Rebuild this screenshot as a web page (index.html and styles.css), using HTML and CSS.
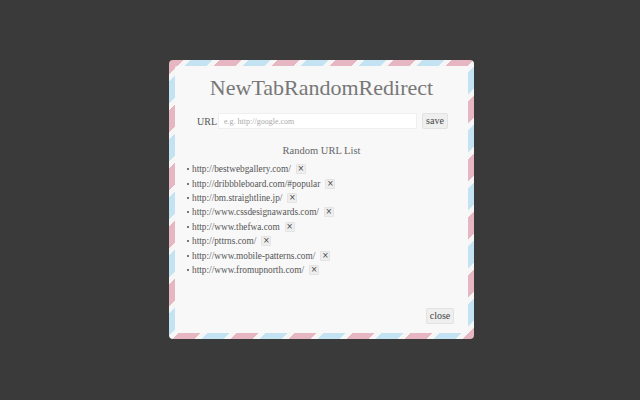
FILE: index.html
```html
<!DOCTYPE html>
<html>
<head>
<meta charset="utf-8">
<link rel="stylesheet" href="styles.css">
</head>
<body>
<div class="card">
  <div class="inner">
    <h1 class="title">NewTabRandomRedirect</h1>
    <div class="url-row">
      <label class="url-label">URL</label>
      <input class="url-input" type="text" placeholder="e.g. http://google.com">
      <button class="btn save">save</button>
    </div>
    <h2 class="list-title">Random URL List</h2>
    <ul class="list">
      <li><span>http://bestwebgallery.com/</span><button class="x">×</button></li>
      <li><span>http://dribbbleboard.com/#popular</span><button class="x">×</button></li>
      <li><span>http://bm.straightline.jp/</span><button class="x">×</button></li>
      <li><span>http://www.cssdesignawards.com/</span><button class="x">×</button></li>
      <li><span>http://www.thefwa.com</span><button class="x">×</button></li>
      <li><span>http://pttrns.com/</span><button class="x">×</button></li>
      <li><span>http://www.mobile-patterns.com/</span><button class="x">×</button></li>
      <li><span>http://www.fromupnorth.com/</span><button class="x">×</button></li>
    </ul>
    <div class="footer">
      <button class="btn close">close</button>
    </div>
  </div>
</div>
</body>
</html>
```

FILE: styles.css
```css
html, body {
  margin: 0;
  padding: 0;
}
body {
  background: #3a3a3a;
  width: 640px;
  height: 400px;
  font-family: "Liberation Serif", "DejaVu Serif", serif;
  color: #555;
}
.card {
  box-sizing: border-box;
  width: 305px;
  height: 279px;
  margin: 60px 0 0 169px;
  padding: 6px;
  border-radius: 4px;
  background: repeating-linear-gradient(135deg,
    #e6b7c3 0, #e6b7c3 10.5px,
    #f6f6f6 10.5px, #f6f6f6 15px,
    #c3e2f2 15px, #c3e2f2 31px,
    #f6f6f6 31px, #f6f6f6 35.5px,
    #e6b7c3 35.5px, #e6b7c3 41px);
}
.inner {
  box-sizing: border-box;
  height: 100%;
  background: #f8f8f8;
  border-radius: 2px;
  display: flex;
  flex-direction: column;
  padding: 0 12px 9px 12px;
}
.title {
  margin: 8px 0 0;
  font-weight: normal;
  font-size: 22px;
  line-height: 28px;
  color: #777;
  text-align: center;
}
.url-row {
  display: flex;
  align-items: center;
  margin-top: 11px;
  padding-left: 10px;
}
.url-label {
  font-size: 10px;
  color: #555;
  width: 21px;
}
.url-input {
  box-sizing: border-box;
  width: 199px;
  height: 16px;
  border: 1px solid #efefef;
  background: #fff;
  padding: 0 5px;
  font-family: "Liberation Serif", serif;
  font-size: 8px;
  outline: none;
}
.url-input::placeholder {
  color: #aaa;
}
.btn {
  box-sizing: border-box;
  border: 1px solid #e2e2e2;
  background: #efefef;
  border-radius: 2px;
  font-family: "Liberation Serif", serif;
  font-size: 10px;
  color: #444;
  padding: 0;
  line-height: 14px;
}
.save {
  width: 26px;
  height: 16px;
  margin-left: 5px;
}
.list-title {
  margin: 15px 0 0;
  font-weight: normal;
  font-size: 10.5px;
  line-height: 14px;
  color: #666;
  text-align: center;
}
.list {
  list-style: none;
  margin: 4px 0 0;
  padding: 0;
}
.list li {
  display: flex;
  align-items: center;
  height: 14.4px;
  font-size: 9.3px;
  color: #555;
}
.list li::before {
  content: "";
  width: 2px;
  height: 2px;
  background: #777;
  margin-right: 3px;
}
.x {
  box-sizing: border-box;
  width: 10px;
  height: 10px;
  margin-left: 5px;
  border: 1px solid #e4e4e4;
  background: #eee;
  border-radius: 1px;
  font-size: 8px;
  line-height: 8px;
  padding: 0;
  color: #444;
  font-family: "DejaVu Sans", sans-serif;
}
.footer {
  margin-top: auto;
  display: flex;
  justify-content: flex-end;
  padding-right: 2px;
}
.close {
  width: 28px;
  height: 16px;
}
```
